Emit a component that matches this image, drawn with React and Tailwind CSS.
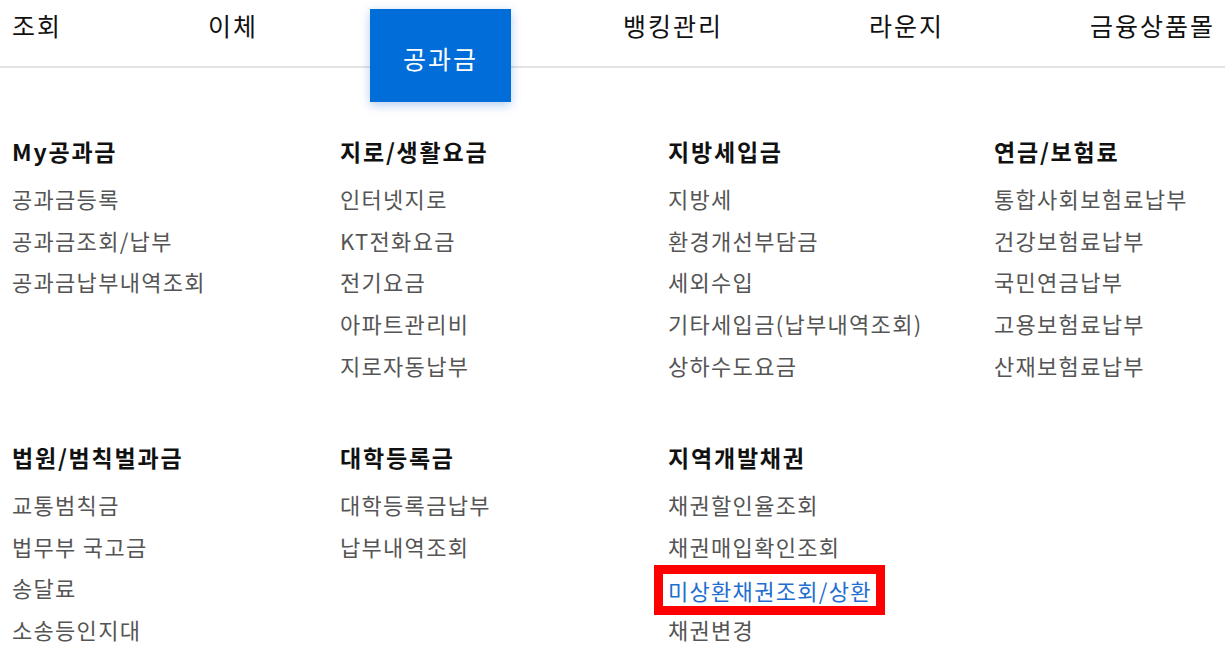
import React from "react";

const nav = ["조회", "이체", "공과금", "뱅킹관리", "라운지", "금융상품몰"];

const row1 = [
  { title: "My공과금", items: ["공과금등록", "공과금조회/납부", "공과금납부내역조회"] },
  { title: "지로/생활요금", items: ["인터넷지로", "KT전화요금", "전기요금", "아파트관리비", "지로자동납부"] },
  { title: "지방세입금", items: ["지방세", "환경개선부담금", "세외수입", "기타세입금(납부내역조회)", "상하수도요금"] },
  { title: "연금/보험료", items: ["통합사회보험료납부", "건강보험료납부", "국민연금납부", "고용보험료납부", "산재보험료납부"] },
];

const row2 = [
  { title: "법원/범칙벌과금", items: ["교통범칙금", "법무부 국고금", "송달료", "소송등인지대"] },
  { title: "대학등록금", items: ["대학등록금납부", "납부내역조회"] },
  { title: "지역개발채권", items: ["채권할인율조회", "채권매입확인조회", "미상환채권조회/상환", "채권변경"] },
];

function Column({ col }) {
  return (
    <div>
      <div className="text-[23px] tracking-[1.8px] font-bold leading-[32px] mb-[11px] text-[#111] whitespace-nowrap">
        {col.title}
      </div>
      {col.items.map((it) =>
        it === "미상환채권조회/상환" ? (
          <div key={it} className="h-[41.7px] flex items-center">
            <span className="mt-[4px] -ml-[5px] pl-[5px] pr-[4px] h-[32px] leading-[32px] text-[22px] tracking-[1.3px] text-[#1f6fd0] outline-[9px] outline-solid outline-[#ff0000] whitespace-nowrap">
              {it}
            </span>
          </div>
        ) : (
          <div key={it} className="text-[22px] tracking-[1.3px] leading-[41.7px] text-[#555] whitespace-nowrap">
            {it}
          </div>
        )
      )}
    </div>
  );
}

export default function App() {
  return (
    <div
      className="w-[1225px] h-[655px] bg-white overflow-hidden"
      style={{ fontFamily: '"Noto Sans CJK KR", "Noto Sans", sans-serif' }}
    >
      <div className="flex justify-between items-start pl-3 pr-[10px] h-[68px] border-b-2 border-[#e3e3e3]">
        {nav.map((n) =>
          n === "공과금" ? (
            <div
              key={n}
              className="-mx-[34px] mt-[9px] w-[141px] h-[93px] bg-[#006dd8] text-white text-[25px] tracking-[2px] flex items-center justify-center pt-[6px] shadow-[0_3px_10px_rgba(0,90,210,0.3)] relative z-10"
            >
              {n}
            </div>
          ) : (
            <div key={n} className="pt-[10px] text-[25px] tracking-[2px] leading-[30px] text-[#111] whitespace-nowrap">
              {n}
            </div>
          )
        )}
      </div>
      <div className="pl-3 pt-[67px]">
        <div className="grid grid-cols-[328px_328px_326px_231px]">
          {row1.map((c) => (
            <Column key={c.title} col={c} />
          ))}
        </div>
        <div className="grid grid-cols-[328px_328px_326px_231px] mt-[54.5px]">
          {row2.map((c) => (
            <Column key={c.title} col={c} />
          ))}
        </div>
      </div>
    </div>
  );
}
